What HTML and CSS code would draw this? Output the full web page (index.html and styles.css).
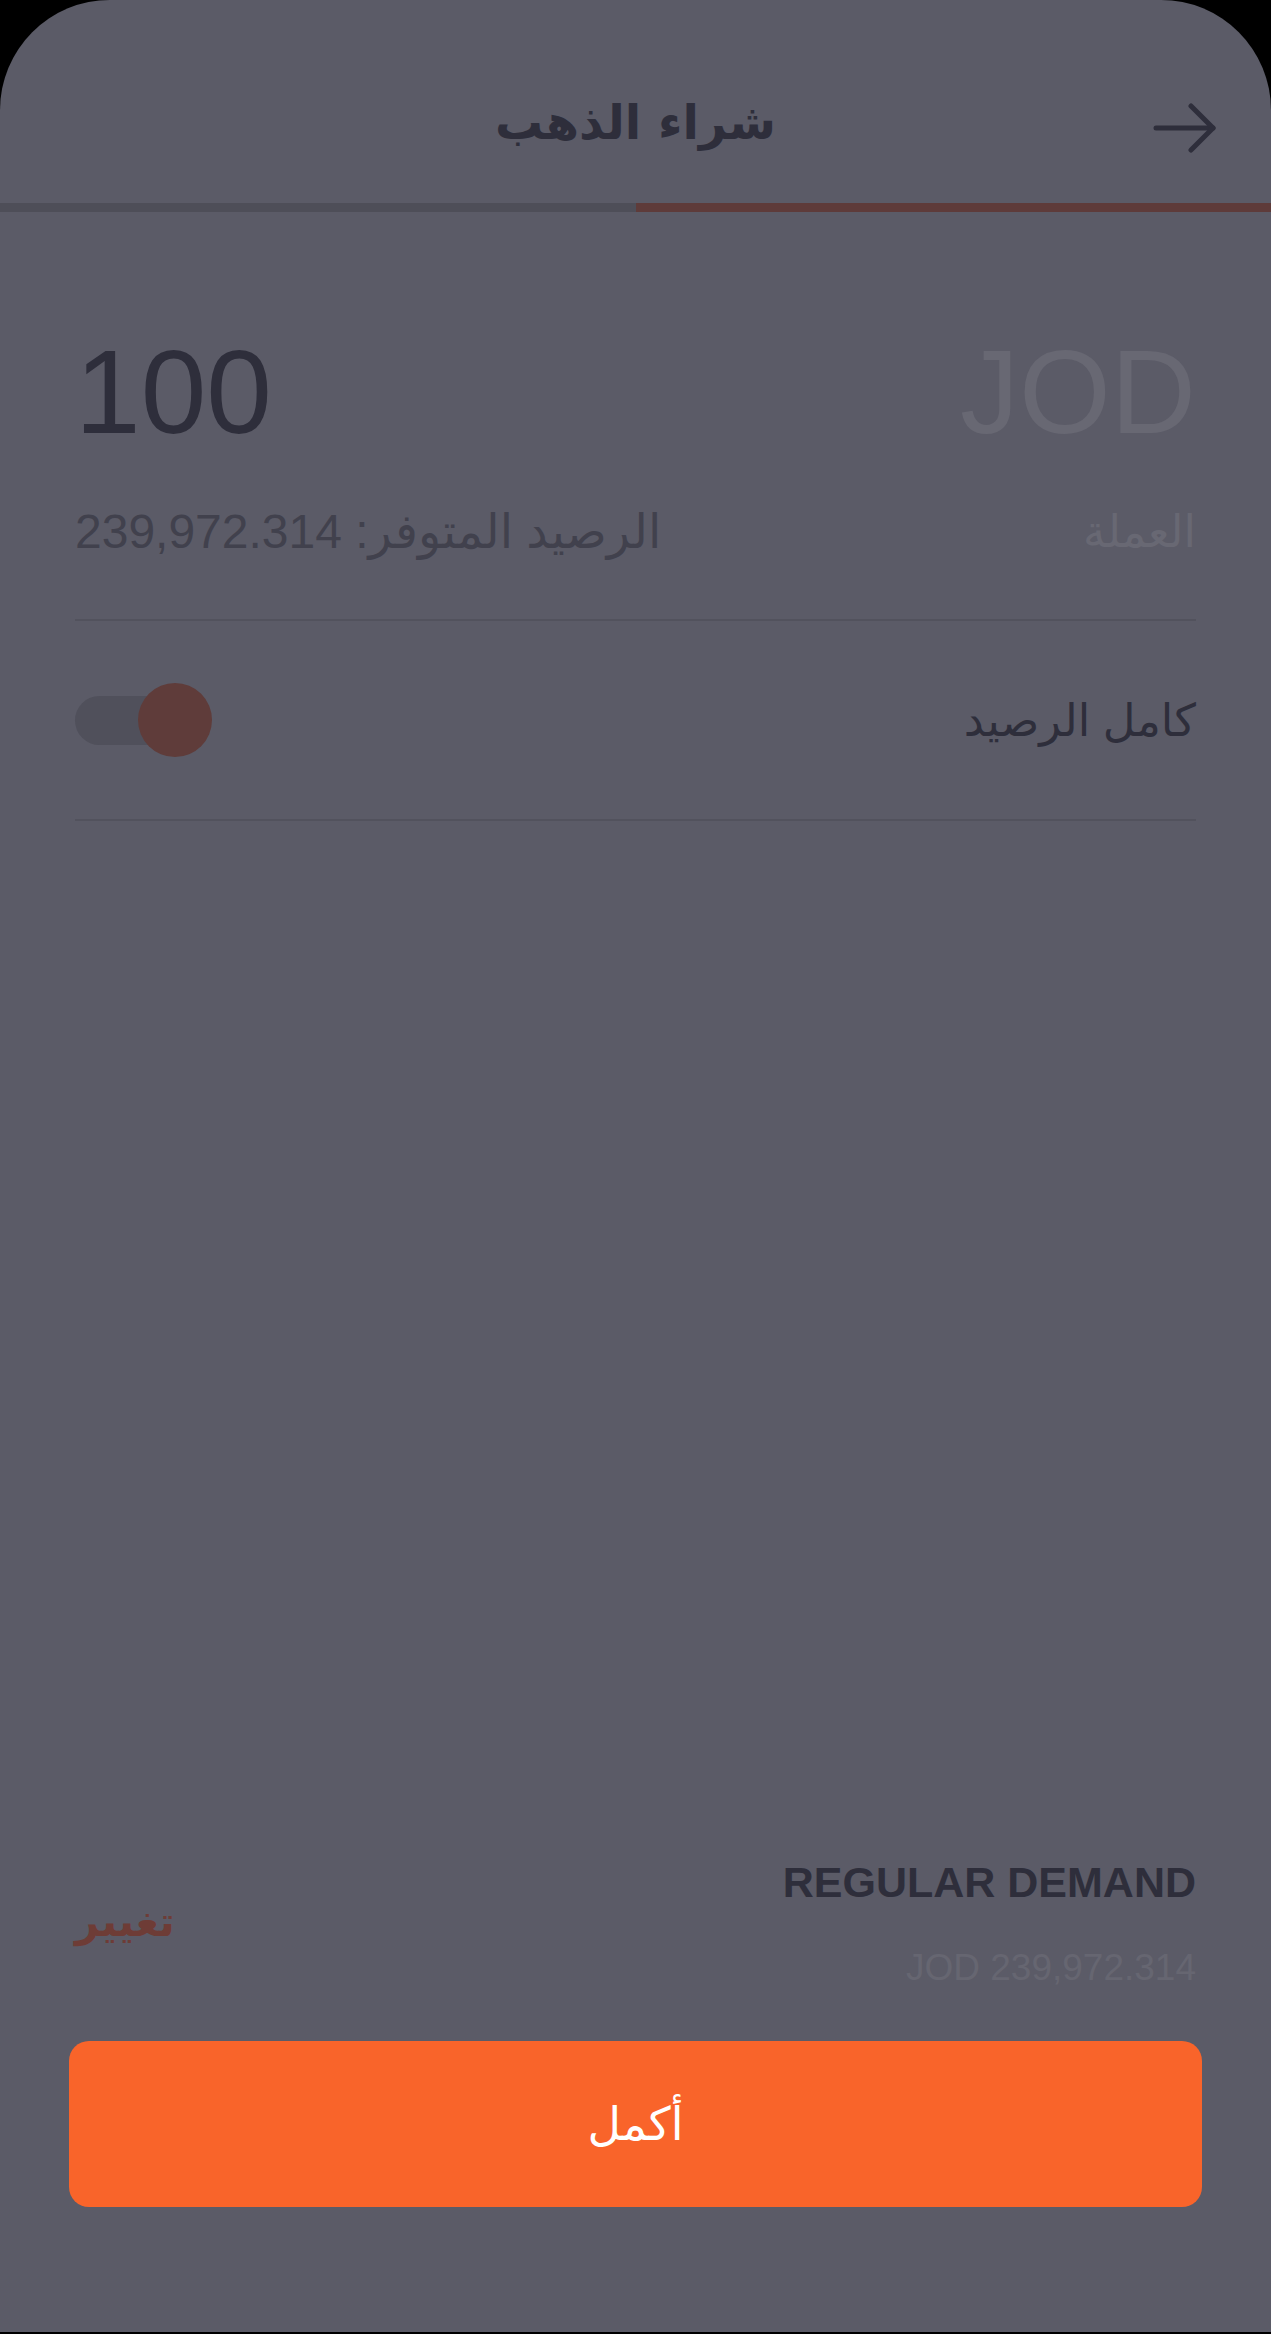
FILE: index.html
```html
<!DOCTYPE html>
<html lang="ar" dir="rtl">
<head>
    <meta charset="UTF-8">
    <meta name="viewport" content="width=device-width, initial-scale=1.0">
    <title>شراء الذهب</title>
    <link rel="stylesheet" href="styles.css">
</head>
<body>

<div class="screen">
    <header class="topbar">
        <a class="back" href="#" aria-label="رجوع">
            <svg width="64" height="50" viewBox="0 0 64 50" fill="none" stroke="#2e2e3b" stroke-width="5" stroke-linecap="round" stroke-linejoin="round">
                <path d="M3 25 H60"/>
                <path d="M38 3 L60 25 L38 47"/>
            </svg>
        </a>
        <h1>شراء الذهب</h1>
        <span></span>
    </header>

    <div class="progress">
        <div class="progress-fill"></div>
    </div>

    <div class="content">
        <div class="amount-row">
            <span class="currency">JOD</span>
            <span class="amount">100</span>
        </div>
        <div class="sub-row">
            <span class="label">العملة</span>
            <span class="balance">الرصيد المتوفر: 239,972.314</span>
        </div>

        <div class="toggle-row">
            <span class="toggle-label">كامل الرصيد</span>
            <span class="switch">
                <span class="switch-track"></span>
                <span class="switch-knob"></span>
            </span>
        </div>
    </div>

    <div class="plan">
        <div class="plan-info">
            <div class="plan-name">REGULAR DEMAND</div>
            <div class="plan-balance">JOD 239,972.314</div>
        </div>
        <a class="plan-change" href="#">تغيير</a>
    </div>

    <button class="continue">أكمل</button>
</div>

</body>
</html>
```

FILE: styles.css
```css
body {
    margin: 0;
    padding: 0;
    background-color: #000;
    font-family: "Liberation Sans", "DejaVu Sans", sans-serif;
}
.screen {
    height: 2332px;
    background-color: #5b5b67;
    border-radius: 110px 110px 0 0;
    display: flex;
    flex-direction: column;
    overflow: hidden;
}
.topbar {
    height: 203px;
    box-sizing: border-box;
    padding: 40px 54px 0;
    display: grid;
    grid-template-columns: 1fr auto 1fr;
    align-items: center;
}
.back {
    justify-self: start;
    display: flex;
    margin-top: 12px;
}
.topbar h1 {
    margin: 0;
    font-family: "DejaVu Sans", sans-serif;
    font-size: 48px;
    font-weight: bold;
    color: #2e2e3b;
}
.progress {
    height: 9px;
    background-color: #4e4e58;
}
.progress-fill {
    width: 50%;
    height: 100%;
    background-color: #5e3b3a;
}
.content {
    padding: 0 75px;
}
.amount-row {
    display: flex;
    justify-content: space-between;
    margin-top: 121px;
    font-size: 118px;
    line-height: 1;
}
.currency {
    color: #686873;
}
.amount {
    color: #2e2e3b;
}
.sub-row {
    display: flex;
    justify-content: space-between;
    align-items: center;
    margin-top: 56px;
    height: 48px;
    font-size: 48px;
    padding-bottom: 64px;
    border-bottom: 2px solid #52525d;
}
.label {
    color: #686873;
    font-size: 45px;
}
.balance {
    color: #41414d;
}
.toggle-row {
    display: flex;
    justify-content: space-between;
    align-items: center;
    height: 198px;
    border-bottom: 2px solid #52525d;
}
.toggle-label {
    font-size: 45px;
    color: #2e2e3b;
}
.switch {
    position: relative;
    width: 137px;
    height: 74px;
    display: flex;
    align-items: center;
}
.switch-track {
    width: 119px;
    height: 49px;
    border-radius: 25px;
    background-color: #50505b;
    margin-right: 18px;
}
.switch-knob {
    position: absolute;
    top: 0;
    left: 63px;
    width: 74px;
    height: 74px;
    border-radius: 50%;
    background-color: #5f3c3a;
}
.plan {
    margin-top: auto;
    padding: 0 75px;
    display: flex;
    justify-content: space-between;
    align-items: center;
}
.plan-name {
    font-size: 43px;
    font-weight: bold;
    line-height: 1;
    color: #2e2e3b;
}
.plan-balance {
    margin-top: 45px;
    font-size: 37px;
    line-height: 1;
    color: #666671;
}
.plan-change {
    font-family: "DejaVu Sans", sans-serif;
    font-size: 42px;
    font-weight: bold;
    color: #6e3c36;
    text-decoration: none;
    margin-bottom: 4px;
}
.continue {
    margin: 55px 69px 125px;
    height: 166px;
    border: none;
    border-radius: 20px;
    background-color: #f9642a;
    color: white;
    font-family: "DejaVu Sans", sans-serif;
    font-size: 46px;
}
```
